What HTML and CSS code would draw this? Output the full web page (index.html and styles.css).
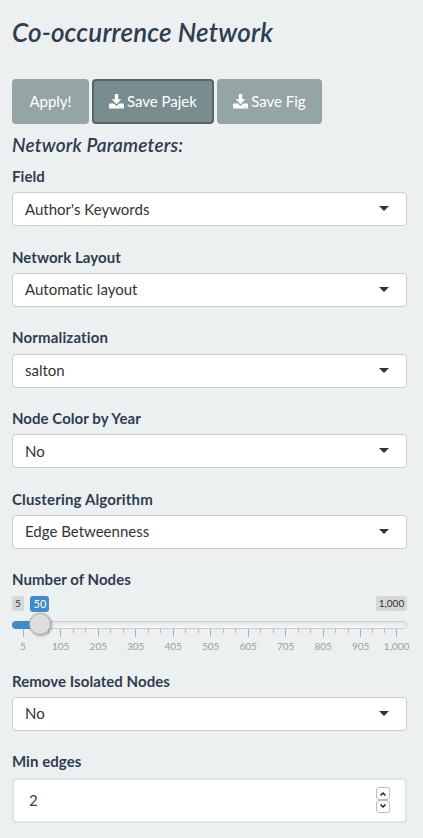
FILE: index.html
```html
<!DOCTYPE html>
<html lang="en">
<head>
<meta charset="utf-8">
<title>Co-occurrence Network</title>
<link rel="stylesheet" href="styles.css">
</head>
<body>
<main class="panel">
  <h1 class="title">Co-occurrence Network</h1>
  <div class="actions">
    <button class="btn btn-apply">Apply!</button>
    <button class="btn btn-active"><svg class="download" viewBox="0 0 16 16"><path fill="currentColor" fill-rule="evenodd" d="M6.2 0h3.6v5.5h3.3L8 11 2.9 5.500h3.300zM.8 10h4.400L8 13l2.800-3H15.200q.8 0 .8.8v3.900q0 .8-.8.8H.8q-.8 0-.8-.8v-3.900q0-.8.8-.8zM11 13.200v1h1v-1zm2.200 0v1h1v-1z"/></svg> Save Pajek</button>
    <button class="btn btn-fig"><svg class="download" viewBox="0 0 16 16"><path fill="currentColor" fill-rule="evenodd" d="M6.2 0h3.6v5.5h3.3L8 11 2.9 5.500h3.300zM.8 10h4.400L8 13l2.800-3H15.200q.8 0 .8.8v3.900q0 .8-.8.8H.8q-.8 0-.8-.8v-3.900q0-.8.8-.8zM11 13.200v1h1v-1zm2.200 0v1h1v-1z"/></svg> Save Fig</button>
  </div>
  <h2 class="subtitle">Network Parameters:</h2>

  <div class="field"><div class="label">Field</div><div class="select">Author's Keywords<span class="caret"></span></div></div>
  <div class="field"><div class="label">Network Layout</div><div class="select">Automatic layout<span class="caret"></span></div></div>
  <div class="field"><div class="label label-wide">Normalization</div><div class="select">salton<span class="caret"></span></div></div>
  <div class="field"><div class="label">Node Color by Year</div><div class="select">No<span class="caret"></span></div></div>
  <div class="field"><div class="label label-wide">Clustering Algorithm</div><div class="select">Edge Betweenness<span class="caret"></span></div></div>

  <div class="field">
    <div class="label">Number of Nodes</div>
    <div class="slider">
      <div class="badges">
        <span class="badge">5</span><span class="badge badge-value">50</span><span class="badge badge-max">1,000</span>
      </div>
      <div class="track"><div class="fill"></div><div class="handle"></div></div>
      <svg class="scale" width="395" height="26">
        <path class="minor" d="M23.500 0v4M36.500 0v4M61.500 0v4M73.500 0v4M98.500 0v4M111.500 0v4M136.500 0v4M148.500 0v4M173.500 0v4M186.500 0v4M211.500 0v4M223.500 0v4M248.500 0v4M261.500 0v4M286.500 0v4M298.500 0v4M323.500 0v4M336.500 0v4M360.500 0v4M372.500 0v4"/>
        <path class="major" d="M11.500 0v8M48.500 0v8M86.500 0v8M123.500 0v8M161.500 0v8M198.500 0v8M236.500 0v8M273.500 0v8M311.500 0v8M348.500 0v8M384.500 0v8"/>
        <g class="numbers">
          <text x="11" y="21">5</text><text x="48.700" y="21">105</text><text x="86.300" y="21">205</text><text x="123.700" y="21">305</text><text x="161.200" y="21">405</text><text x="198.600" y="21">505</text><text x="236.200" y="21">605</text><text x="273.700" y="21">705</text><text x="311.200" y="21">805</text><text x="348.700" y="21">905</text><text x="384.600" y="21">1,000</text>
        </g>
      </svg>
    </div>
  </div>

  <div class="field"><div class="label">Remove Isolated Nodes</div><div class="select">No<span class="caret"></span></div></div>
  <div class="field">
    <div class="label">Min edges</div>
    <div class="number">2
      <span class="spinner"><span class="step"><svg width="8" height="6"><path d="M1.500 4.500L4 2l2.500 2.500"/></svg></span><span class="step"><svg width="8" height="6"><path d="M1.500 1.500L4 4l2.500-2.500"/></svg></span></span>
    </div>
  </div>
</main>
</body>
</html>
```
FILE: styles.css
```css
* { box-sizing: border-box; }
body {
  margin: 0;
  height: 838px;
  overflow: hidden;
  background: #ecf0f1;
  color: #2c3e50;
  font: 15px/21px Lato, sans-serif;
  font-variant-ligatures: none;
}
.panel { padding: 18px 16px 0 12px; }
.title { margin: 0; font-size: 26px; line-height: 29px; font-weight: 600; font-style: italic; letter-spacing: .17px; }
.actions { display: flex; gap: 3px; margin-top: 32px; }
.btn {
  width: 122px;
  height: 45px;
  padding: 0;
  border: 2px solid #95a5a6;
  border-radius: 4px;
  background: #95a5a6;
  color: #fff;
  font: 15px/21px Lato, sans-serif;
  white-space: nowrap;
}
.btn-apply { width: 77px; }
.btn-fig { width: 105px; }
.btn-active { background: #798d8f; border-color: #566566; }
.download { width: 15px; height: 15px; vertical-align: -2px; margin-right: -1px; }
.subtitle { margin: 10px 0 0; font-size: 19px; line-height: 21px; font-weight: 600; font-style: italic; letter-spacing: .17px; }
.subtitle + .field { margin-top: 10.950px; }
.field { margin-bottom: 20.350px; }
.label { height: 21px; margin-bottom: 5.350px; font-weight: 700; letter-spacing: .05px; }
.label-wide { letter-spacing: .16px; }
.select {
  display: flex;
  align-items: center;
  justify-content: space-between;
  height: 34px;
  padding: 0 17px .3px 12px;
  border: 1px solid #ccc;
  border-radius: 4px;
  background: #fff;
  color: #333;
}
.caret { border: 5px solid transparent; border-top-color: #333; border-bottom: 0; margin-top: -.8px; }
.slider { height: 54.600px; }
.badges { display: flex; align-items: flex-start; height: 25px; }
.badge {
  height: 15px;
  padding: 0 3px;
  border-radius: 3px;
  background: #d4d8d9;
  color: #333;
  font-size: 10px;
  line-height: 15px;
}
.badge:first-child { width: 12px; }
.badge-value { width: 19px; height: 16px; margin-left: 6px; padding: 0 0 0 1px; text-align: center; background: #428bca; color: #fff; font-size: 11px; line-height: 16px; }
.badge-max { width: 31px; padding: 0; text-align: center; margin-left: auto; }
.track {
  position: relative;
  height: 8px;
  border: 1px solid #ccc;
  border-radius: 8px;
  background: linear-gradient(#dedede -50%, #fff 150%);
}
.fill { width: 28px; height: 8px; margin: -1px; border-radius: 8px 0 0 8px; background: #428bca; }
.handle {
  position: absolute;
  left: 16px;
  top: -9px;
  width: 22px;
  height: 22px;
  border: 1px solid #ababab;
  border-radius: 50%;
  background: #dedede;
  box-shadow: 1px 1px 3px rgba(0, 0, 0, .3);
}
.scale { display: block; overflow: visible; }
.minor { stroke: #b5bbbd; }
.major { stroke: #91b9dc; }
.numbers { fill: #999fa3; font-size: 10px; text-anchor: middle; }
.number {
  display: flex;
  align-items: center;
  justify-content: space-between;
  height: 45px;
  padding: 0 15px;
  border: 2px solid #dce4ec;
  border-radius: 4px;
  background: #fff;
}
.spinner { display: flex; flex-direction: column; }
.step {
  display: flex;
  align-items: center;
  justify-content: center;
  width: 14px;
  height: 13px;
  border: 1px solid #bbb;
  border-radius: 3px;
}
.step path { fill: none; stroke: #222; stroke-width: 1.500; }
.step + .step path { transform: translateY(-1px); }
```
